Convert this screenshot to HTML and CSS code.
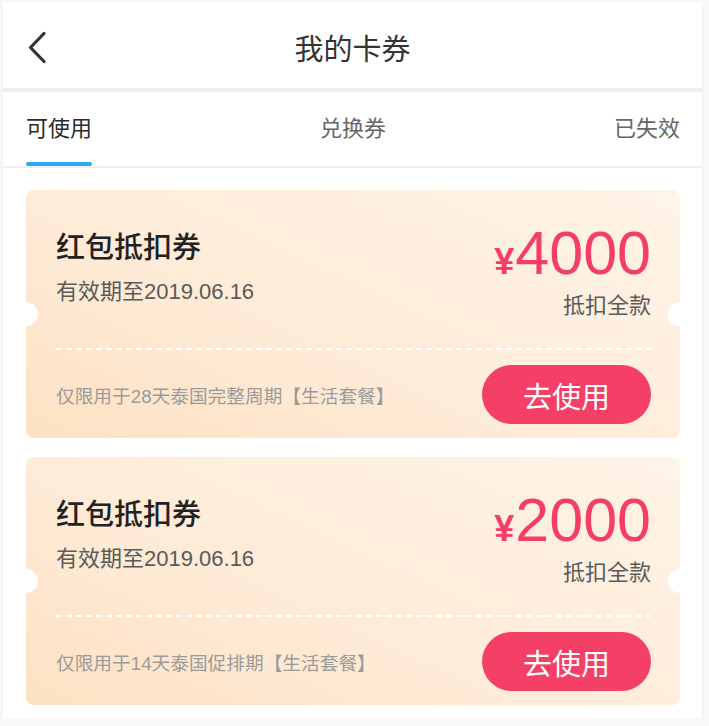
FILE: index.html
```html
<!DOCTYPE html>
<html lang="zh-CN">
<head>
  <meta charset="UTF-8" />
  <meta name="viewport" content="width=device-width, initial-scale=1.0" />
  <title>我的卡券</title>
  <link rel="stylesheet" href="styles.css">
</head>
<body>
  <div class="screen">
    <header class="topbar">
      <div class="back">
        <svg width="20" height="33" viewBox="0 0 20 33">
          <path d="M17 2.5 L3.5 16.5 L17 30.5" fill="none" stroke="#333" stroke-width="3.2" stroke-linecap="round" stroke-linejoin="round"/>
        </svg>
      </div>
      <h1>我的卡券</h1>
      <div></div>
    </header>

    <nav class="tabs">
      <div class="tab active">可使用<span class="bar"></span></div>
      <div class="tab">兑换券<span class="bar"></span></div>
      <div class="tab">已失效<span class="bar"></span></div>
    </nav>

    <div class="list">
      <div class="coupon">
        <div class="top">
          <div class="info">
            <div class="name">红包抵扣券</div>
            <div class="date">有效期至2019.06.16</div>
          </div>
          <div class="value">
            <div class="amount"><span class="yen">¥</span>4000</div>
            <div class="note">抵扣全款</div>
          </div>
        </div>
        <div class="dash"></div>
        <div class="bottom">
          <div class="limit">仅限用于28天泰国完整周期【生活套餐】</div>
          <button>去使用</button>
        </div>
      </div>

      <div class="coupon">
        <div class="top">
          <div class="info">
            <div class="name">红包抵扣券</div>
            <div class="date">有效期至2019.06.16</div>
          </div>
          <div class="value">
            <div class="amount"><span class="yen">¥</span>2000</div>
            <div class="note">抵扣全款</div>
          </div>
        </div>
        <div class="dash"></div>
        <div class="bottom">
          <div class="limit">仅限用于14天泰国促排期【生活套餐】</div>
          <button>去使用</button>
        </div>
      </div>
    </div>
  </div>
</body>
</html>
```

FILE: styles.css
```css
body {
  font-family: "Liberation Sans", "Noto Sans CJK SC", sans-serif;
  margin: 0;
  background: #f8f8f8;
  color: #333;
}
.screen {
  width: 699px;
  height: 716px;
  margin: 2px 0 0 3px;
  background: #fff;
  box-shadow: 0 1px 4px rgba(0, 0, 0, 0.05);
  overflow: hidden;
}
.topbar {
  display: grid;
  grid-template-columns: 1fr auto 1fr;
  align-items: center;
  height: 82px;
  padding-top: 4px;
  border-bottom: 4px solid #efefef;
}
.back {
  padding-left: 24px;
  display: flex;
}
.topbar h1 {
  margin: 0;
  font-size: 29px;
  font-weight: normal;
  color: #333;
}
.tabs {
  display: flex;
  justify-content: space-between;
  padding: 0 22px 0 23px;
  border-bottom: 2px solid #f0f0f0;
}
.tab {
  display: flex;
  flex-direction: column;
  align-items: stretch;
  padding-top: 22px;
  font-size: 22px;
  line-height: 30px;
  color: #666;
}
.tab .bar {
  height: 4px;
  margin-top: 18px;
  border-radius: 2px;
}
.tab.active {
  color: #2a2a2a;
}
.tab.active .bar {
  background: #2aaaf4;
}
.list {
  display: flex;
  flex-direction: column;
  gap: 19px;
  padding: 22px 22px 0 23px;
}
.coupon {
  position: relative;
  height: 248px;
  padding: 0 29px 0 30px;
  box-sizing: border-box;
  border-radius: 8px;
  background: linear-gradient(25deg, #fde1c3 0%, #feecd9 45%, #fef4e8 100%);
}
.coupon::before, .coupon::after {
  content: "";
  position: absolute;
  top: 112px;
  width: 24px;
  height: 24px;
  border-radius: 50%;
  background: #fff;
}
.coupon::before {
  left: -12px;
}
.coupon::after {
  right: -12px;
}
.top {
  display: flex;
  justify-content: space-between;
  height: 158px;
  padding-top: 30px;
  box-sizing: border-box;
}
.info {
  padding-top: 8px;
}
.name {
  font-size: 29px;
  line-height: 40px;
  font-weight: 500;
  color: #222;
}
.date {
  margin-top: 9px;
  font-size: 22px;
  line-height: 30px;
  color: #5a5a5a;
}
.value {
  display: flex;
  flex-direction: column;
  align-items: flex-end;
  padding-top: 3px;
}
.amount {
  font-size: 61px;
  line-height: 60px;
  color: #f43e64;
}
.amount .yen {
  font-size: 36px;
  font-weight: bold;
  margin-right: 1px;
}
.note {
  margin-top: -1px;
  font-size: 22px;
  line-height: 30px;
  color: #5a5a5a;
}
.dash {
  height: 2px;
  background: repeating-linear-gradient(to right, #fff 0 6px, transparent 6px 10px);
}
.bottom {
  display: flex;
  justify-content: space-between;
  align-items: center;
  padding: 15px 0 14px;
}
.limit {
  font-size: 18.7px;
  color: #9b9b9b;
}
button {
  width: 169px;
  height: 59px;
  border: none;
  border-radius: 30px;
  background: #f43f66;
  color: #fff;
  font-family: inherit;
  font-size: 29px;
  cursor: pointer;
}
```
